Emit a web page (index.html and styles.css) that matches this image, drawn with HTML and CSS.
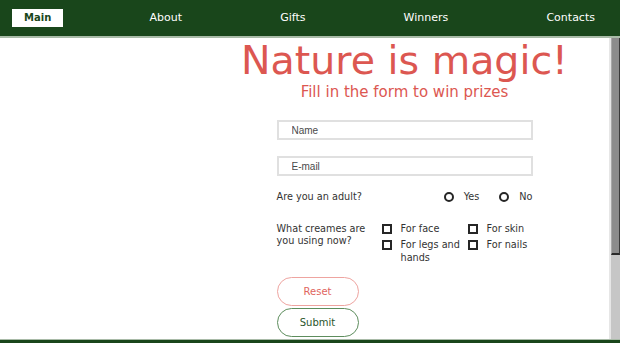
FILE: index.html
```html
<!doctype html>
<html>
    <head>
        <meta charset="utf-8">
        <title>Nature is magic</title>
        <link rel="stylesheet" href="styles.css">
    </head>

    <body>
        <header class="topbar">
            <nav class="menu">
                <a class="menu-item active" href="#">Main</a>
                <a class="menu-item" href="#">About</a>
                <a class="menu-item" href="#">Gifts</a>
                <a class="menu-item" href="#">Winners</a>
                <a class="menu-item" href="#">Contacts</a>
            </nav>
        </header>

        <div class="viewport">
            <main class="content">
                <div class="side"></div>
                <section class="promo">
                    <h1 class="title">Nature is magic!</h1>
                    <p class="subtitle">Fill in the form to win prizes</p>
                    <form class="prize-form">
                        <input class="field field-name" type="text" placeholder="Name">
                        <input class="field field-mail" type="email" placeholder="E-mail">

                        <div class="question adult">
                            <span class="question-label">Are you an adult?</span>
                            <div class="radios">
                                <label class="choice"><input type="radio" name="adult"> Yes</label>
                                <label class="choice"><input type="radio" name="adult"> No</label>
                            </div>
                        </div>

                        <div class="question creams">
                            <span class="question-label">What creames are you using now?</span>
                            <div class="checks">
                                <label class="choice"><input type="checkbox"> <span>For face</span></label>
                                <label class="choice"><input type="checkbox"> <span>For skin</span></label>
                                <label class="choice"><input type="checkbox"> <span>For legs and hands</span></label>
                                <label class="choice"><input type="checkbox"> <span>For nails</span></label>
                            </div>
                        </div>

                        <div class="buttons">
                            <button class="btn btn-reset" type="reset">Reset</button>
                            <button class="btn btn-submit" type="submit">Submit</button>
                        </div>
                    </form>
                </section>
            </main>
            <div class="scrollbar">
                <div class="scrollbar-thumb"></div>
            </div>
        </div>

        <footer class="bottombar"></footer>
    </body>
</html>
```

FILE: styles.css
```css
html, body{
    margin: 0;
    height: 100%;
}

body{
    display: flex;
    flex-direction: column;
    font-family: 'DejaVu Sans', Verdana, sans-serif;
    background-color: white;
    overflow: hidden;
}

.topbar{
    background-color: #19461b;
    height: 36px;
    border-bottom: 2px solid #a9bba8;
    flex-shrink: 0;
}

.menu{
    display: flex;
    justify-content: space-between;
    align-items: center;
    height: 100%;
    padding: 0 13px 0 12px;
}

.menu-item{
    color: white;
    text-decoration: none;
    font-size: 11px;
    padding: 0 12px;
    line-height: 18px;
}

.menu-item.active{
    background-color: white;
    color: #19461b;
    font-weight: bold;
    font-size: 10px;
}

.viewport{
    flex: 1;
    min-height: 0;
    display: flex;
}

.content{
    flex: 1;
    overflow: hidden;
    display: grid;
    grid-template-columns: 200px 1fr;
    align-content: start;
}

/* fake scrollbar, the real one is hidden in the screenshot browser */
.scrollbar{
    width: 9px;
    background-color: #c6c6c6;
    border-left: 2px solid #e6e6e6;
    display: flex;
    flex-direction: column;
}

.scrollbar-thumb{
    height: 215px;
    background-color: #8c8c8c;
    border-left: 1px solid #a8a8a8;
    border-right: 1px solid #3a3a3a;
    border-bottom: 2px solid #2a2a2a;
}

.promo{
    display: flex;
    flex-direction: column;
    align-items: center;
}

.title{
    margin: 0;
    font-size: 39.5px;
    line-height: 45px;
    font-weight: normal;
    color: #dc5751;
}

.subtitle{
    margin: 0;
    font-size: 15px;
    line-height: 18px;
    color: #dc5751;
}

.prize-form{
    width: 256px;
    margin-top: 19px;
    display: flex;
    flex-direction: column;
    font-size: 9.7px;
    color: #333;
}

.field{
    box-sizing: border-box;
    height: 20px;
    border: 2px solid #e0e0e0;
    padding: 0 0 0 13px;
    margin: 0;
    font-family: 'Liberation Sans', Arial, sans-serif;
    font-size: 10px;
    outline: none;
}

.field::placeholder{
    color: #4a4a4a;
}

.field-mail{
    margin-top: 16px;
}

.question{
    display: flex;
}

.question-label{
    flex-shrink: 0;
}

.adult{
    margin-top: 14px;
    justify-content: space-between;
    align-items: center;
    line-height: 14px;
}

.radios{
    display: flex;
    gap: 20px;
}

.choice{
    display: flex;
    align-items: flex-start;
    gap: 9px;
}

.choice input{
    appearance: none;
    margin: 0;
    width: 10px;
    height: 10px;
    box-sizing: border-box;
    border: 2px solid #262626;
    flex-shrink: 0;
}

.radios .choice{
    align-items: center;
    gap: 10px;
}

.radios input{
    border-radius: 50%;
}

.creams{
    margin-top: 18px;
}

.creams .question-label{
    width: 105px;
    line-height: 12px;
    padding-top: 1px;
}

.checks{
    display: grid;
    grid-template-columns: 86px auto;
    row-gap: 3px;
    line-height: 13px;
}

.checks input{
    margin-top: 2px;
}

.checks span{
    width: 66px;
}

.buttons{
    margin-top: 13px;
    display: flex;
    flex-direction: column;
    gap: 2px;
}

.btn{
    width: 82px;
    height: 29px;
    border-radius: 15px;
    background-color: white;
    font-family: 'DejaVu Sans', Verdana, sans-serif;
    font-size: 10px;
    padding: 0;
}

.btn-reset{
    border: 1px solid #eea4a0;
    color: #e06560;
}

.btn-submit{
    border: 1px solid #5d8d5d;
    color: #2a552b;
}

.bottombar{
    flex-shrink: 0;
    height: 3px;
    border-top: 1px solid #a9bba8;
    background-color: #19461b;
}
```
